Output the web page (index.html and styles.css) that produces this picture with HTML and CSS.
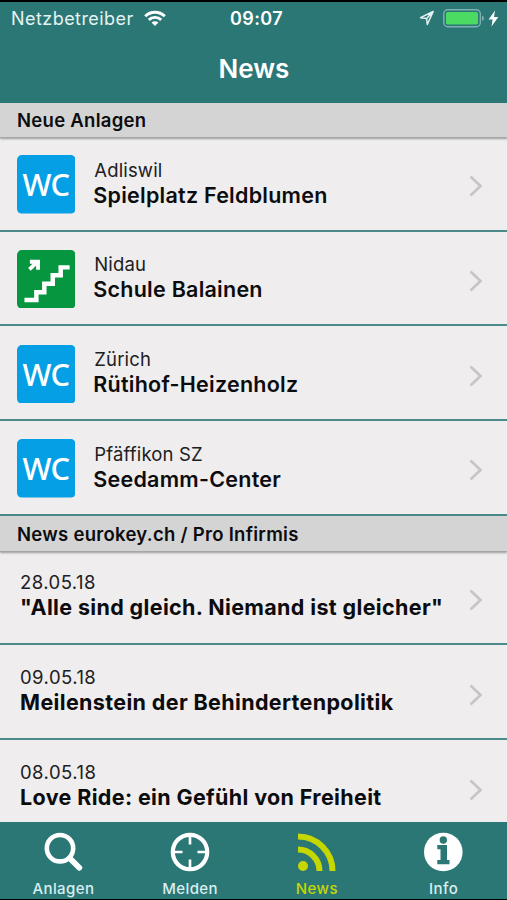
FILE: index.html
```html
<!DOCTYPE html>
<html lang="de">
<head>
<meta charset="utf-8">
<title>News</title>
<link rel="stylesheet" href="styles.css">
</head>
<body>
<div class="app">
  <header class="top">
    <div class="status">
      <div class="carrier"><span>Netzbetreiber</span>
        <svg width="22" height="17" viewBox="0 0 22 17" fill="none" stroke="#fff" stroke-width="2.9"><path d="M1.2 6.2a14 14 0 0 1 19.600 0M4.800 9.900a8.800 8.800 0 0 1 12.400 0"/><path d="M11 16l-3.400-3.400a4.900 4.900 0 0 1 6.800 0z" fill="#fff" stroke="none"/></svg>
      </div>
      <div class="clock">09:07</div>
      <div class="power">
        <svg width="16" height="16" viewBox="0 0 16 16" fill="none" stroke="#e4f3f2" stroke-width="1.500" stroke-linejoin="round"><path d="M14.200 1.500L1.500 7.700l6.100.8.700 6z M14.200 1.500L7.600 8.500"/></svg>
        <svg class="battery" width="42" height="19" viewBox="0 0 42 19"><rect x=".8" y=".8" width="36.500" height="17" rx="4" fill="none" stroke="#7fb0b2" stroke-width="1.400"/><rect x="3" y="3" width="32" height="12.500" rx="1.800" fill="#4cdb62"/><path d="M39 6.500q2 .8 2 2.800t-2 2.800z" fill="#7fb0b2"/></svg>
        <svg width="11" height="17" viewBox="0 0 11 17" fill="#fff"><path d="M7 .5L.6 9.400h4L3.500 16.400 10.300 7H6z"/></svg>
      </div>
    </div>
    <h1>News</h1>
  </header>

  <main class="list">
    <h2 class="section">Neue Anlagen</h2>
    <div class="row">
      <svg class="tile" viewBox="0 0 59 59"><rect width="59" height="59" rx="5" fill="#049fe5"/><text x="5.500" y="41" textLength="48">WC</text></svg>
      <div class="text"><p>Adliswil</p><h3>Spielplatz Feldblumen</h3></div>
      <svg class="chev" viewBox="0 0 14 22"><path d="M1.500 1.500L11.500 11l-10 9.500"/></svg>
    </div>
    <div class="row">
      <svg class="tile" viewBox="0 0 59 59"><rect width="59" height="59" rx="5" fill="#06963f"/><path class="stairs" d="M7.500 50.300H19.500V42.500H27.500V34H36V25.500H44V17.500H53"/><path class="arrow" d="M12.500 19.500L20.500 12M13 11.800H21.200V20"/></svg>
      <div class="text"><p>Nidau</p><h3>Schule Balainen</h3></div>
      <svg class="chev" viewBox="0 0 14 22"><path d="M1.500 1.500L11.500 11l-10 9.500"/></svg>
    </div>
    <div class="row">
      <svg class="tile" viewBox="0 0 59 59"><rect width="59" height="59" rx="5" fill="#049fe5"/><text x="5.500" y="41" textLength="48">WC</text></svg>
      <div class="text"><p>Zürich</p><h3>Rütihof-Heizenholz</h3></div>
      <svg class="chev" viewBox="0 0 14 22"><path d="M1.500 1.500L11.500 11l-10 9.500"/></svg>
    </div>
    <div class="row">
      <svg class="tile" viewBox="0 0 59 59"><rect width="59" height="59" rx="5" fill="#049fe5"/><text x="5.500" y="41" textLength="48">WC</text></svg>
      <div class="text"><p>Pfäffikon SZ</p><h3>Seedamm-Center</h3></div>
      <svg class="chev" viewBox="0 0 14 22"><path d="M1.500 1.500L11.500 11l-10 9.500"/></svg>
    </div>

    <h2 class="section second">News eurokey.ch / Pro Infirmis</h2>
    <div class="row news">
      <div class="text"><p>28.05.18</p><h3>"Alle sind gleich. Niemand ist gleicher"</h3></div>
      <svg class="chev" viewBox="0 0 14 22"><path d="M1.500 1.500L11.500 11l-10 9.500"/></svg>
    </div>
    <div class="row news">
      <div class="text"><p>09.05.18</p><h3>Meilenstein der Behindertenpolitik</h3></div>
      <svg class="chev" viewBox="0 0 14 22"><path d="M1.500 1.500L11.500 11l-10 9.500"/></svg>
    </div>
    <div class="row news">
      <div class="text"><p>08.05.18</p><h3>Love Ride: ein Gefühl von Freiheit</h3></div>
      <svg class="chev" viewBox="0 0 14 22"><path d="M1.500 1.500L11.500 11l-10 9.500"/></svg>
    </div>
  </main>

  <nav class="tabs">
    <a class="tab"><svg viewBox="0 0 40 40"><g fill="none" stroke="#fff"><circle cx="17" cy="16.200" r="13.200" stroke-width="4.600"/><path d="M27 26.500L36.300 35.800" stroke-width="5.800" stroke-linecap="round"/></g></svg><span>Anlagen</span></a>
    <a class="tab"><svg viewBox="0 0 40 40"><g fill="none" stroke="#fff"><circle cx="20" cy="20" r="17.200" stroke-width="4.200"/><path d="M20 4v8.500M20 27.500V36M4 20h8.500M27.500 20H36" stroke-width="2.600"/></g></svg><span>Melden</span></a>
    <a class="tab active"><svg viewBox="0 0 40 40"><circle cx="6" cy="34" r="5" fill="#c6d700"/><g fill="none" stroke="#c6d700" stroke-width="6"><path d="M1 17.500A21.500 21.500 0 0 1 22.500 39M1 4.500A34.500 34.500 0 0 1 35.500 39"/></g></svg><span>News</span></a>
    <a class="tab"><svg viewBox="0 0 40 40"><circle cx="19.300" cy="20" r="19.300" fill="#fff"/><g fill="#2b7776"><circle cx="19.300" cy="8" r="3.700"/><path d="M13.300 13H23V28h2.500v4.200h-12.200V28h3.200V17.200h-3.200z"/></g></svg><span>Info</span></a>
  </nav>
</div>
</body>
</html>
```

FILE: styles.css
```css
* { box-sizing: border-box; margin: 0; padding: 0; }
body { background: #000; font-family: Inter, "Liberation Sans", sans-serif; color: #0c0c0e; overflow: hidden; }
svg { display: block; flex: none; }
.app { height: 900px; padding: 2px 0 1px; display: flex; flex-direction: column; }
.top { height: 101px; flex: none; background: #2b7776; color: #fff; }
.status { height: 32px; display: grid; grid-template-columns: 1fr auto 1fr; align-items: center; padding: 0 8px 0 11px; }
.carrier { display: flex; align-items: center; gap: 10px; font-size: 18px; letter-spacing: 0.45px; color: #e4f3f2; }
.clock { font-size: 18px; font-weight: 600; letter-spacing: 0.4px; padding-left: 3px; }
.power { display: flex; align-items: center; justify-content: flex-end; gap: 8px; }
.power .battery { margin-right: -5px; }
h1 { font-size: 26px; line-height: 32px; font-weight: 600; text-align: center; margin-top: 18.500px; padding-left: 1px; }
.list { flex: 1; min-height: 0; overflow: hidden; background: #efedee; }
.section { position: relative; height: 35px; line-height: 35px; padding-left: 17px; margin-bottom: -1.25px; background: #d4d4d4; font-size: 18.500px; font-weight: 600; letter-spacing: 0.28px; border-bottom: 1px solid #a6a6a6; box-shadow: 0 1px 2px rgba(0, 0, 0, 0.35); }
.section.second { height: 36px; line-height: 37px; }
.row { height: 94.800px; display: flex; align-items: flex-start; padding: 18.300px 25px 0 16.700px; border-bottom: 2px solid #4c8a8a; }
.tile { width: 58.600px; height: 58.600px; }
.tile text { font-family: "Noto Sans", sans-serif; font-size: 31px; font-weight: 500; fill: #fff; }
.stairs { fill: none; stroke: #fff; stroke-width: 4.500; }
.arrow { fill: none; stroke: #fff; stroke-width: 3.900; }
.text { flex: 1; padding: 2.500px 0 0 18px; white-space: nowrap; }
.text p { font-size: 18.500px; line-height: 24px; letter-spacing: 0.15px; color: #202022; padding-left: 1px; }
.text h3 { font-size: 21.500px; line-height: 26px; font-weight: 600; letter-spacing: 0.25px; }
.chev { width: 14px; height: 22px; margin: 20px -1px 0 0; fill: none; stroke: #c5c4c6; stroke-width: 2.600; }
.news { padding-left: 20px; }
.news .text { padding: 1.500px 0 0; }
.news .text p { padding: 0; letter-spacing: 0.45px; }
.news .text h3 { font-weight: 700; letter-spacing: 0.36px; }
.tabs { height: 77px; flex: none; display: grid; grid-template-columns: repeat(4, 1fr); background: #2b7776; color: #d9eeee; }
.tab { display: flex; flex-direction: column; align-items: center; padding-top: 10px; font-size: 15px; font-weight: 500; letter-spacing: 0.4px; }
.tab svg { width: 40px; height: 40px; }
.tab span { line-height: 20px; margin-top: 7px; }
.active { color: #c6d700; }
```
